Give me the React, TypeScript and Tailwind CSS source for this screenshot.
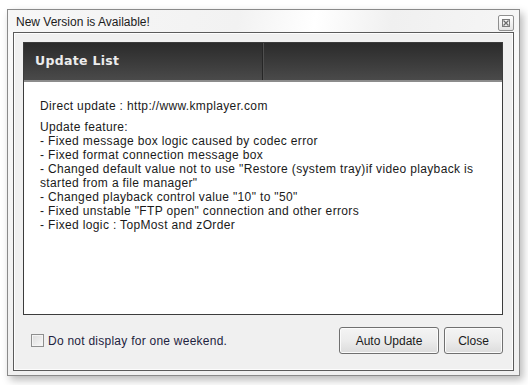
import React from "react";

const lines = [
  "- Fixed message box logic caused by codec error",
  "- Fixed format connection message box",
  "- Changed default value not to use \"Restore (system tray)if video playback is",
  "started from a file manager\"",
  "- Changed playback control value \"10\" to \"50\"",
  "- Fixed unstable \"FTP open\" connection and other errors",
  "- Fixed logic : TopMost and zOrder",
];

export default function App() {
  return (
    <div className="w-[528px] h-[385px] bg-white pt-[9px] pl-[7px] overflow-hidden">
      <div
        className="w-[513px] h-[367px] border border-[#8a8a8a] flex flex-col bg-gradient-to-b from-[#fafafa] to-[#f0f0f0] shadow-[3px_4px_8px_rgba(0,0,0,0.28)]"
        style={{ fontFamily: '"Liberation Sans", Arial, sans-serif' }}
      >
        {/* title bar */}
        <div className="h-[22px] flex items-center justify-between pl-[8px] pr-[5px] bg-[linear-gradient(100deg,#f7f7f7_0%,#f2f2f2_45%,#ffffff_60%,#f0f0f0_75%,#f6f6f6_100%)]">
          <span className="text-[12px] text-[#1b1b1b] leading-none mt-[2px]">New Version is Available!</span>
          <div className="w-[16px] h-[16px] mt-[4px] border border-[#8f8f8f] rounded-[2px] bg-gradient-to-b from-white to-[#e4e4e4] flex items-center justify-center">
            <svg width="8" height="8" viewBox="0 0 8 8">
              <rect x="0.5" y="0.5" width="7" height="7" fill="none" stroke="#7a7a7a" strokeWidth="1" />
              <path d="M1.5 1.5 L6.5 6.5 M6.5 1.5 L1.5 6.5" stroke="#6a6a6a" strokeWidth="1.2" />
            </svg>
          </div>
        </div>
        {/* inner frame */}
        <div className="mx-[5px] mb-[4px] flex-1 border border-[#5a5a5a] bg-[#f0f0f0] flex flex-col shadow-[inset_0_0_0_1px_#fdfdfd]">
          <div className="mt-[9px] ml-[9px] mr-[10px] h-[273px] border border-[#3c3c3c] bg-white flex flex-col">
            <div className="h-[39px] shrink-0 bg-gradient-to-b from-[#2b2b2b] to-[#4a4a4a] border-b-[2px] border-[#8c8c8c] flex items-center relative">
              <span className="pl-[11px] font-bold text-[#ececec] tracking-[0.3px]" style={{ fontFamily: '"DejaVu Sans", "Liberation Sans", sans-serif', fontSize: 12.5 }}>
                Update List
              </span>
              <div className="absolute left-[238px] top-0 bottom-0 w-[1px] bg-[#262626]" />
              <div className="absolute left-[239px] top-0 bottom-0 w-[1px] bg-[#4f4f4f]" />
            </div>
            <div className="pl-[16px] pt-[17px] text-[12px] leading-[14px] text-[#1a1a1a] tracking-[0.35px]">
              <div>Direct update : http://www.kmplayer.com</div>
              <div className="mt-[7px]">Update feature:</div>
              {lines.map((l, i) => (
                <div key={i} className="whitespace-pre">{l}</div>
              ))}
            </div>
          </div>
          <div className="flex items-center ml-[17px] mr-[10px] mt-[12px]">
            <div className="w-[13px] h-[13px] border border-[#8e8f8f] bg-gradient-to-br from-[#dcdcdc] to-[#f8f8f8] shadow-[inset_0_0_0_1px_#f4f4f4]" />
            <span className="ml-[4px] text-[12px] text-[#1e2340] tracking-[0.25px]">Do not display for one weekend.</span>
            <div className="flex-1" />
            <button className="w-[100px] h-[27px] rounded-[3px] border border-[#707070] bg-gradient-to-b from-[#f4f4f4] via-[#ececec] to-[#dcdcdc] text-[12px] text-[#1b1b1b] shadow-[inset_0_0_0_1px_#fbfbfb]">
              Auto Update
            </button>
            <button className="ml-[5px] w-[59px] h-[27px] rounded-[3px] border border-[#707070] bg-gradient-to-b from-[#f4f4f4] via-[#ececec] to-[#dcdcdc] text-[12px] text-[#1b1b1b] shadow-[inset_0_0_0_1px_#fbfbfb]">
              Close
            </button>
          </div>
        </div>
      </div>
    </div>
  );
}
